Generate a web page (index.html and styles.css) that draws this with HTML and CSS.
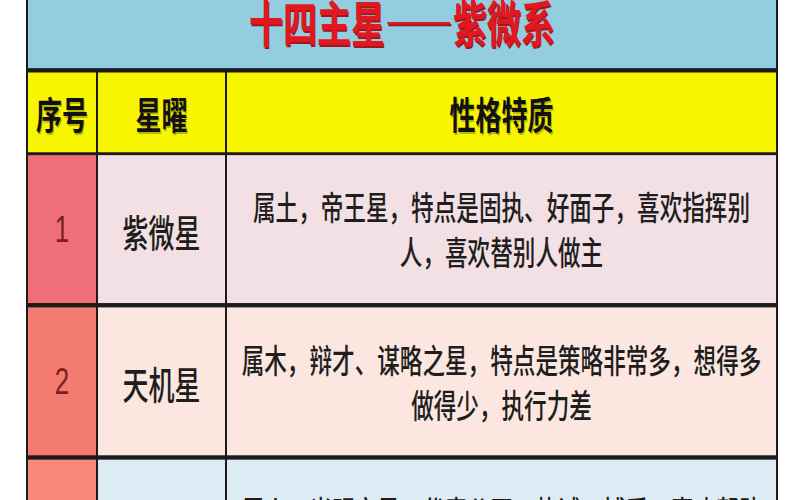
FILE: index.html
```html
<!DOCTYPE html>
<html lang="zh-CN">
<head>
<meta charset="utf-8">
<title>十四主星——紫微系</title>
<link rel="stylesheet" href="styles.css">
</head>
<body>
<div class="sheet">
  <div class="title">十四主星——紫微系</div>
  <div class="row head">
    <div class="cell">序号</div>
    <div class="cell">星曜</div>
    <div class="cell">性格特质</div>
  </div>
  <div class="row r1">
    <div class="cell num">1</div>
    <div class="cell name">紫微星</div>
    <div class="cell desc">属土，帝王星，特点是固执、好面子，喜欢指挥别人，喜欢替别人做主</div>
  </div>
  <div class="row r2">
    <div class="cell num">2</div>
    <div class="cell name">天机星</div>
    <div class="cell desc">属木，辩才、谋略之星，特点是策略非常多，想得多做得少，执行力差</div>
  </div>
  <div class="row r3">
    <div class="cell num">3</div>
    <div class="cell name">太阳星</div>
    <div class="cell desc">属火，光明之星，代表公正、热诚、博爱，喜欢帮助别人，乐于付出</div>
  </div>
</div>
</body>
</html>
```

FILE: styles.css
```css
html {
  overflow: hidden;
  background: #ffffff;
}

body {
  margin: 0;
  padding: 0;
  height: 500px;
  background: #ffffff;
}

.sheet {
  width: 752px;
  margin-left: 26px;
  box-sizing: border-box;
  padding: 0 2px;
  background: #1c1a1a;
  display: flex;
  flex-direction: column;
  transform: scaleY(1.45);
  transform-origin: 0 0;
  font-family: "Noto Sans CJK SC", "Noto Sans", sans-serif;
  color: #1e1e1e;
}

.title {
  height: 47px;
  background: #93cde0;
  text-align: center;
  color: #e3171f;
  font-size: 34px;
  font-weight: 700;
  line-height: 30px;
  text-shadow: 1px 1px 0 #9b1a1f;
}

.row {
  display: grid;
  grid-template-columns: 68px 127px 1fr;
  column-gap: 2px;
}

.cell {
  display: flex;
  align-items: center;
  justify-content: center;
  text-align: center;
}

.head {
  height: 55px;
  margin-top: 3px;
}

.head .cell {
  background: #f8f500;
  font-size: 26px;
  font-weight: 700;
  color: #111;
  text-shadow: 1px 1px 0 rgba(0, 0, 0, 0.25);
}

.r1 {
  height: 102px;
  margin-top: 2px;
}

.r2,
.r3 {
  height: 102px;
  margin-top: 3px;
}

.num {
  font-family: "Liberation Sans", Arial, sans-serif;
  font-size: 26px;
  color: #7a1f22;
}

.name {
  font-size: 26px;
  font-weight: 500;
}

.desc {
  padding: 0 12px;
  font-size: 22.6px;
  line-height: 31px;
  font-weight: 500;
}

.r1 .num { background: #ef6e78; }
.r2 .num { background: #f47b6f; }
.r3 .num { background: #f8897a; }

.r1 .name,
.r1 .desc { background: #f3e0e4; }

.r2 .name,
.r2 .desc { background: #fbe7df; }

.r3 .name,
.r3 .desc { background: #ddebf4; }
```
